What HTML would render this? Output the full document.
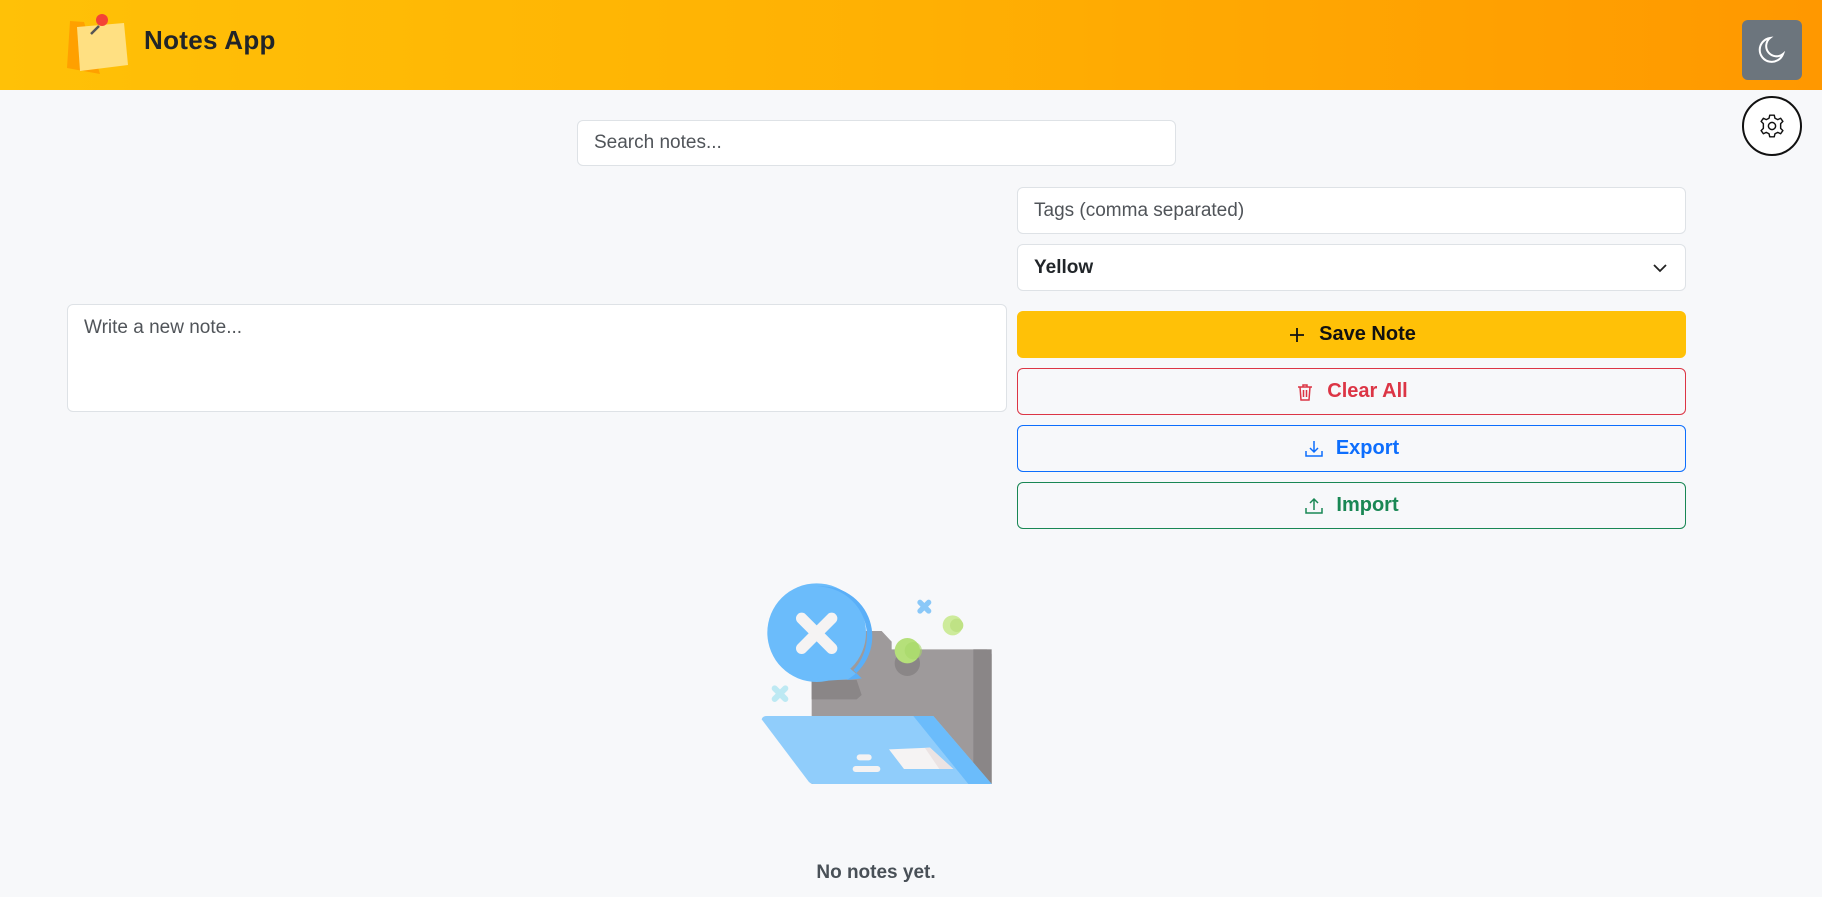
<!DOCTYPE html>
<html><head><meta charset="utf-8"><style>
*{box-sizing:border-box;margin:0;padding:0}
body{width:1822px;height:897px;overflow:hidden;background:#f7f8fa;font-family:"Liberation Sans",sans-serif;position:relative}
.hdr{position:absolute;left:0;top:0;width:1822px;height:90px;background:linear-gradient(90deg,#ffc107,#ffb003 50%,#ff9800)}
.title{position:absolute;left:144px;top:25px;font-size:26px;font-weight:bold;color:#212529;letter-spacing:.3px}
.moon{position:absolute;left:1742px;top:20px;width:60px;height:60px;background:#6c757d;border-radius:6px}
.gear{position:absolute;left:1742px;top:96px;width:60px;height:60px;background:#fff;border:2px solid #111;border-radius:50%}
.inp{position:absolute;background:#fff;border:1px solid #dee2e6;border-radius:6px;font-size:19px;color:#505459;padding:0 16px;display:flex;align-items:center}
.btn{position:absolute;left:1017px;width:669px;height:47px;border-radius:6px;border:1.5px solid;display:flex;align-items:center;justify-content:center;font-size:20px;font-weight:bold;gap:12px}
.btn svg{width:20px;height:20px}
.empty{position:absolute;left:0;width:1752px;top:862px;text-align:center;font-size:19px;font-weight:bold;color:#495057}
</style></head><body>
<div class="hdr">
<svg style="position:absolute;left:64px;top:12px" width="68" height="62" viewBox="0 0 68 62">
<polygon points="6,9 20,10 36,62 3,56" fill="#ffa000"/>
<polygon points="13,15 60,11 64,53 16,59" fill="#ffe082"/>
<line x1="27" y1="22" x2="35" y2="14" stroke="#555" stroke-width="2.5"/>
<circle cx="38" cy="8" r="6" fill="#f44336"/>
</svg>
<div class="title">Notes App</div>
</div>
<div class="moon"><svg width="60" height="60" viewBox="0 0 60 60"><path d="M28 18 A12 12 0 1 0 41 34 A10 10 0 0 1 28 18 Z" fill="none" stroke="#fff" stroke-width="2"/></svg></div>
<div class="gear"><svg width="56" height="56" viewBox="0 0 56 56"><g transform="translate(28,28) scale(0.9)" fill="none" stroke="#111" stroke-width="1.6"><path d="M-2.5,-12 L2.5,-12 L3.3,-8.6 L6.4,-7.1 L9.6,-8.6 L12.1,-5.1 L9.6,-2.6 L9.6,2.6 L12.1,5.1 L9.6,8.6 L6.4,7.1 L3.3,8.6 L2.5,12 L-2.5,12 L-3.3,8.6 L-6.4,7.1 L-9.6,8.6 L-12.1,5.1 L-9.6,2.6 L-9.6,-2.6 L-12.1,-5.1 L-9.6,-8.6 L-6.4,-7.1 L-3.3,-8.6 Z" stroke-linejoin="round"/><circle r="4"/></g></svg></div>

<div class="inp" style="left:577px;top:120px;width:599px;height:46px">Search notes...</div>
<div class="inp" style="left:1017px;top:187px;width:669px;height:47px">Tags (comma separated)</div>
<div class="inp" style="left:1017px;top:244px;width:669px;height:47px;color:#212529;font-weight:bold">Yellow<svg style="position:absolute;right:18px;top:18px" width="14" height="10" viewBox="0 0 14 10"><path d="M1 2 L7 8 L13 2" fill="none" stroke="#222" stroke-width="1.8"/></svg></div>
<div class="inp" style="left:67px;top:304px;width:940px;height:108px;align-items:flex-start;padding-top:12px">Write a new note...</div>

<div class="btn" style="top:311px;background:#ffc107;border-color:#ffc107;color:#111"><svg viewBox="0 0 20 20"><path d="M10 3V17M3 10H17" stroke="#111" stroke-width="1.8"/></svg>Save Note</div>
<div class="btn" style="top:368px;border-color:#dc3545;color:#dc3545"><svg viewBox="0 0 20 20" fill="none" stroke="#dc3545" stroke-width="1.5"><path d="M3 5H17M8 5V3H12V5M5 5L6 18H14L15 5M8.5 8V15M11.5 8V15"/></svg>Clear All</div>
<div class="btn" style="top:425px;border-color:#0d6efd;color:#0d6efd"><svg viewBox="0 0 20 20" fill="none" stroke="#0d6efd" stroke-width="1.5"><path d="M10 2V13M6 9L10 13L14 9M2 12V17H18V12"/></svg>Export</div>
<div class="btn" style="top:482px;border-color:#198754;color:#198754"><svg viewBox="0 0 20 20" fill="none" stroke="#198754" stroke-width="1.5"><path d="M10 14V3M6 7L10 3L14 7M2 12V17H18V12"/></svg>Import</div>

<svg style="position:absolute;left:700px;top:560px" width="340" height="337" viewBox="0 0 1020 1011">
<path d="M335 230 Q335 213 352 213 L545 213 L575 245 L575 268 L860 268 Q875 268 875 283 L875 672 L335 672 Z" fill="#9e9a9b"/>
<rect x="820" y="268" width="55" height="404" fill="#8a8687"/>
<path d="M335 360 L470 360 L485 405 L470 418 L335 418 Z" fill="#8a8687"/>
<circle cx="622" cy="310" r="38" fill="#8a8687"/>
<circle cx="622" cy="272" r="38" fill="#b5e07a"/>
<circle cx="640" cy="272" r="26" fill="#a7d768" opacity=".6"/>
<circle cx="758" cy="196" r="30" fill="#cdeb9b"/>
<circle cx="770" cy="196" r="20" fill="#bfe285"/>
<circle cx="350" cy="218" r="148" fill="#6bbcfb"/>
<path d="M420 300 L485 355 L340 365 Z" fill="#6bbcfb"/>
<path d="M350 80 A148 148 0 0 1 460 330 L485 355 L440 360 A150 150 0 0 0 350 80 Z" fill="#5aaff8"/>
<g stroke="#f5f3f3" stroke-width="34" stroke-linecap="round"><line x1="305" y1="175" x2="395" y2="265"/><line x1="395" y1="175" x2="305" y2="265"/></g>
<g stroke="#8ac8f8" stroke-width="16" stroke-linecap="round"><line x1="660" y1="127" x2="686" y2="153"/><line x1="686" y1="127" x2="660" y2="153"/></g>
<g stroke="#bde9f3" stroke-width="18" stroke-linecap="round"><line x1="224" y1="385" x2="256" y2="417"/><line x1="256" y1="385" x2="224" y2="417"/></g>
<path d="M185 478 Q188 468 200 468 L700 468 L875 672 L340 672 Q332 672 326 665 Z" fill="#90cdfb"/>
<path d="M640 468 L700 468 L875 672 L805 672 Z" fill="#6bbcfb"/>
<path d="M567 568 L690 563 L760 627 L612 627 Z" fill="#f5f3f3"/>
<path d="M675 564 L690 563 L760 627 L718 627 Z" fill="#ebe3e3"/>
<rect x="470" y="583" width="45" height="18" rx="9" fill="#f5f3f3"/>
<rect x="458" y="618" width="83" height="18" rx="9" fill="#f5f3f3"/>
</svg>
<div class="empty">No notes yet.</div>
</body></html>
